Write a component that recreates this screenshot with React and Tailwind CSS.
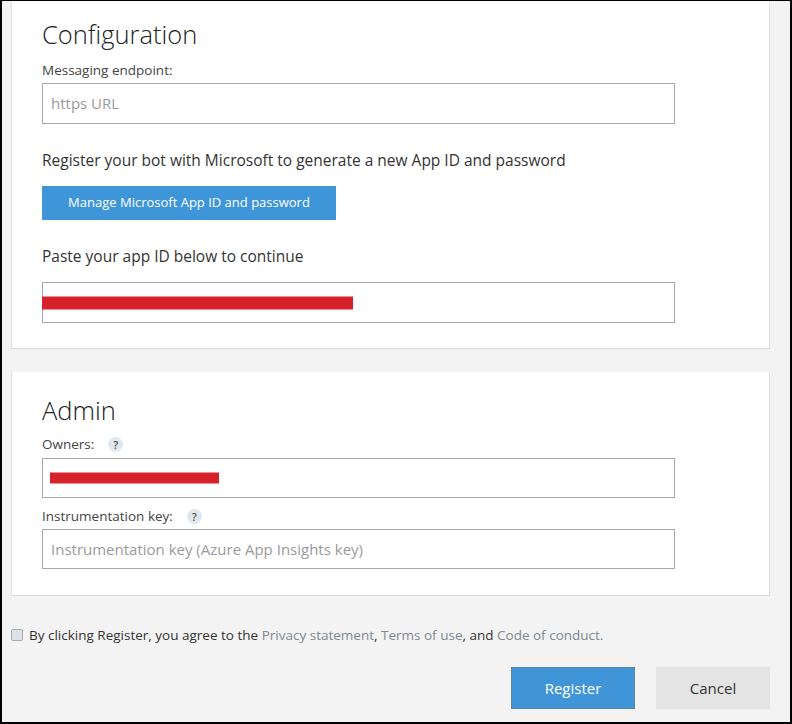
const font = { fontFamily: '"Open Sans", "Noto Sans", sans-serif' }

function Help() {
  return (
    <span className="ml-[14px] inline-flex h-[15px] w-[15px] items-center justify-center rounded-full bg-[#e1e7ee] text-[11px] font-semibold leading-none text-[#555]">
      ?
    </span>
  )
}

function Field({ placeholder, redact, tall = true }) {
  return (
    <div
      className={`relative flex w-[633px] items-center border border-[#a9a9a9] bg-white px-[8px] ${tall ? 'h-[41px]' : 'h-[40px]'}`}
    >
      {placeholder && <span className="text-[15px] text-[#9a9a9a]">{placeholder}</span>}
      {redact && <div className={`absolute top-1/2 -translate-y-1/2 bg-[#d7222c] ${redact}`} />}
    </div>
  )
}

export default function App() {
  return (
    <div
      className="h-[724px] w-[792px] overflow-hidden border-t border-b-2 border-l-2 border-r-2 border-black bg-[#f3f3f3] text-[#333]"
      style={font}
    >
      <div className="pl-[9px] pr-[20px]">
        {/* Configuration */}
        <section className="h-[348px] border-x border-b border-x-[#e2e2e2] border-b-[#d3dbe3] bg-white pl-[30px] pt-[16px]">
          <h2 className="text-[25.5px] font-light leading-[34px] text-[#222]">Configuration</h2>
          <div className="mt-[10px] text-[13.5px] leading-[18px] text-[#444]">Messaging endpoint:</div>
          <div className="mt-[4px]">
            <Field placeholder="https URL" />
          </div>
          <p className="mt-[26px] text-[15.5px] leading-[20px] text-[#333]">
            Register your bot with Microsoft to generate a new App ID and password
          </p>
          <button className="mt-[16px] h-[34px] w-[294px] bg-[#3e95d8] text-[13px] text-white">
            Manage Microsoft App ID and password
          </button>
          <p className="mt-[26px] text-[15.5px] leading-[20px] text-[#333]">Paste your app ID below to continue</p>
          <div className="mt-[16px]">
            <Field redact="-left-px h-[13px] w-[311px]" />
          </div>
        </section>

        {/* Admin */}
        <section className="mt-[23px] h-[224px] border-x border-b border-x-[#e2e2e2] border-b-[#d3dbe3] bg-white pl-[30px] pt-[21px]">
          <h2 className="text-[25.5px] font-light leading-[34px] text-[#222]">Admin</h2>
          <div className="mt-[8px] flex items-center text-[13.5px] leading-[18px] text-[#444]">
            Owners: <Help />
          </div>
          <div className="mt-[5px]">
            <Field tall={false} redact="left-[7px] h-[11px] w-[169px]" />
          </div>
          <div className="mt-[9px] flex items-center text-[13.5px] leading-[18px] text-[#444]">
            Instrumentation key: <Help />
          </div>
          <div className="mt-[4px]">
            <Field tall={false} placeholder="Instrumentation key (Azure App Insights key)" />
          </div>
        </section>

        {/* Agreement */}
        <div className="mt-[30px] flex items-center text-[13.5px] leading-[18px] text-[#333]">
          <span className="mr-[6px] h-[12px] w-[12px] rounded-[2px] border border-[#a7adb3] bg-[#dde2e7]" />
          <span>
            By clicking Register, you agree to the{' '}
            <a className="text-[#808890]">Privacy statement</a>,{' '}
            <a className="text-[#808890]">Terms of use</a>, and{' '}
            <a className="text-[#808890]">Code of conduct.</a>
          </span>
        </div>

        <div className="mt-[23px] flex justify-end gap-[21px]">
          <button className="h-[42px] w-[124px] bg-[#3f95d7] text-[15px] text-white outline-1 outline-dotted outline-[#777] -outline-offset-1">
            Register
          </button>
          <button className="h-[42px] w-[114px] bg-[#e4e4e4] text-[15px] text-[#333]">Cancel</button>
        </div>
      </div>
    </div>
  )
}
